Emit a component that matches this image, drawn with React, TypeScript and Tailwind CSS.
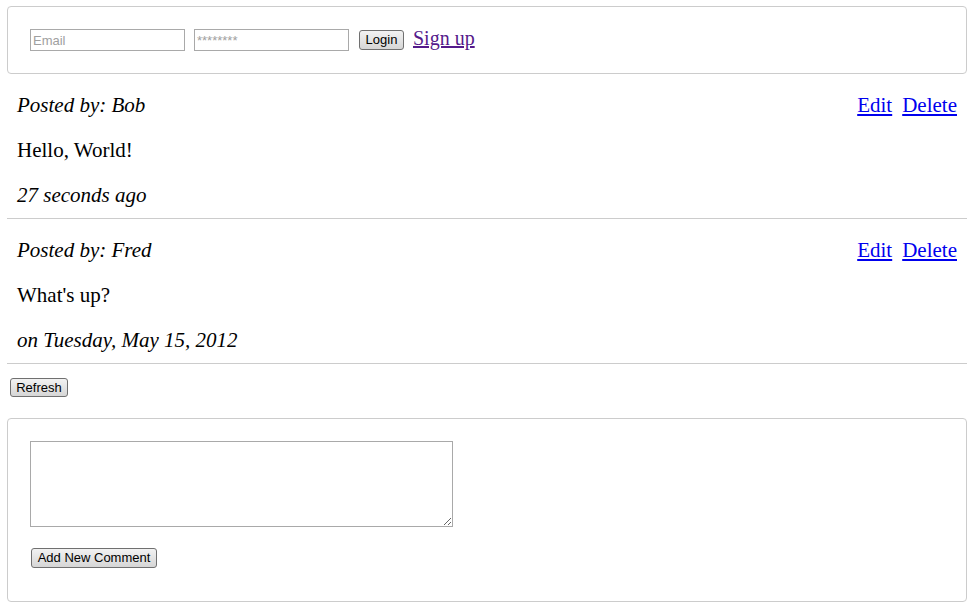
import React from 'react';

const posts = [
  { author: 'Bob', body: 'Hello, World!', when: '27 seconds ago' },
  { author: 'Fred', body: "What's up?", when: 'on Tuesday, May 15, 2012' },
];

const btn =
  "whitespace-nowrap rounded-[3px] border border-[#707070] bg-gradient-to-b from-[#f2f2f2] to-[#d6d6d6] text-[13px] leading-[16px] text-black font-['Liberation_Sans',Arial,sans-serif]";

export default function App() {
  return (
    <div className="w-[976px] min-h-[612px] bg-white font-['Liberation_Serif','Times_New_Roman',serif] text-black text-[20px]">
      <div className="ml-[7px] w-[960px] pt-[6px]">
        {/* Login bar */}
        <div className="h-[68px] rounded-[4px] border border-[#cccccc] pl-[22px] pt-[22px] flex items-start">
          <input
            placeholder="Email"
            className="w-[155px] h-[22px] border border-[#a9a9a9] px-[2px] text-[13px] font-['Liberation_Sans',Arial,sans-serif] placeholder:text-[#a0a0a0] outline-none"
          />
          <input
            placeholder="********"
            className="ml-[9px] w-[155px] h-[22px] border border-[#a9a9a9] px-[2px] text-[13px] font-['Liberation_Sans',Arial,sans-serif] placeholder:text-[#a0a0a0] outline-none"
          />
          <button className={`ml-[10px] mt-[1px] h-[20px] w-[45px] px-0 ${btn}`}>Login</button>
          <a href="#" className="ml-[9px] -mt-[2px] leading-[23px] text-[#551a8b] underline">
            Sign up
          </a>
        </div>

        {/* Posts */}
        {posts.map((p) => (
          <div key={p.author} className="border-b border-[#cccccc] pt-[9px] pl-[10px] pr-[10px] text-[21px]">
            <div className="h-[45px] flex items-center justify-between">
              <span className="italic">Posted by: {p.author}</span>
              <span>
                <a href="#" className="text-[#0000ee] underline">Edit</a>
                <a href="#" className="ml-[10px] text-[#0000ee] underline">Delete</a>
              </span>
            </div>
            <div className="h-[45px] flex items-center">{p.body}</div>
            <div className="h-[45px] flex items-center italic">{p.when}</div>
          </div>
        ))}

        <div className="pt-[14px] pl-[3px] flex">
          <button className={`h-[19px] w-[58px] px-0 ${btn}`}>Refresh</button>
        </div>

        {/* Comment form */}
        <div className="mt-[21px] h-[184px] rounded-[4px] border border-[#cccccc] pl-[22px] pt-[22px] flex flex-col items-start">
          <textarea className="block w-[423px] h-[86px] border border-[#a9a9a9] outline-none resize" />
          <button className={`ml-[1px] mt-[21px] h-[20px] w-[126px] px-0 ${btn}`}>Add New Comment</button>
        </div>
      </div>
    </div>
  );
}
